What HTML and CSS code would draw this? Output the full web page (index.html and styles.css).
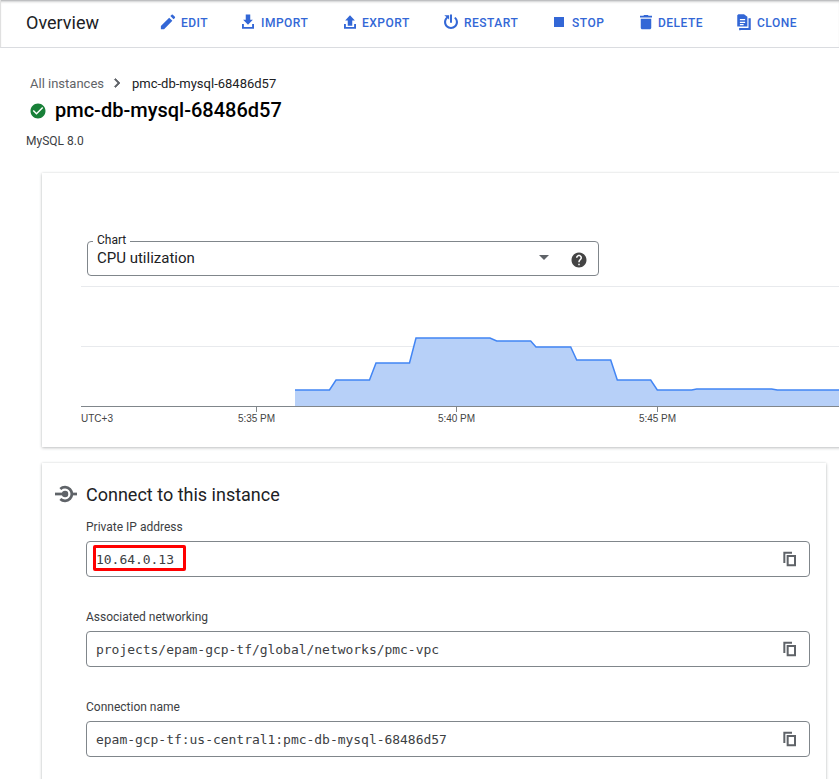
FILE: index.html
```html
<!DOCTYPE html>
<html lang="en">
<head>
<meta charset="utf-8">
<title>Overview</title>
<link rel="stylesheet" href="styles.css">
</head>
<body>
<div class="page">
  <header class="topbar">
    <h1 class="topbar-title">Overview</h1>
    <nav class="actions">
      <a class="action action-edit"><svg viewBox="0 0 24 24"><path d="M2.500 17.250V21.500h4.250L17.810 10.440l-4.250-4.250L2.500 17.250zM21.210 6.540c.39-.39.39-1.020 0-1.410l-2.840-2.840c-.39-.39-1.020-.39-1.410 0l-1.830 1.830 4.250 4.250 1.830-1.830z"/></svg>EDIT</a>
      <a class="action action-import"><svg viewBox="0 0 24 24"><path d="M9 2h6v7h3.500L12 15.500 5.500 9H9zM4 14.500h2.500V18.500h11V14.500H20V21H4z"/></svg>IMPORT</a>
      <a class="action action-export"><svg viewBox="0 0 24 24"><path d="M9 17h6v-7h3.500L12 3 5.500 10H9zM4 14.500h2.500V18.500h11V14.500H20V21H4z"/></svg>EXPORT</a>
      <a class="action action-restart"><svg viewBox="0 0 24 24"><path d="M13.300 2h-2.600v11h2.600z"/><path d="M17.830 5.170l-1.700 1.900C17.800 8.300 18.500 10 18.500 12c0 3.600-2.900 6.500-6.500 6.500S5.500 15.600 5.500 12c0-2 .8-3.800 2.300-5L9.500 9V3H3l2.900 2.200C3.900 6.900 2.700 9.300 2.700 12c0 5.100 4.200 9.300 9.300 9.300s9.300-4.200 9.300-9.300c0-2.700-1.300-5.200-3.470-6.830z"/></svg>RESTART</a>
      <a class="action action-stop"><svg viewBox="0 0 24 24"><path d="M5.300 5.300h13.400v13.400H5.300z"/></svg>STOP</a>
      <a class="action action-delete"><svg viewBox="0 0 24 24"><path d="M5 19.500c0 1.100.9 2 2 2h10c1.100 0 2-.9 2-2V7.500H5zM20 3.500h-4.500l-1-1h-5l-1 1H4V6h16z"/></svg>DELETE</a>
      <a class="action action-clone"><svg viewBox="0 0 24 24"><path fill-rule="evenodd" d="M4.500 1.500h7.500l4.500 3.500v13H3V3zM6.500 8v1.800h7V8zm0 3.500v1.800h7v-1.800zm0 3v1.800h5v-1.800z"/><path d="M18 7h3v15.500H7.500V23H5.500v-3H18z"/></svg>CLONE</a>
    </nav>
  </header>

  <main class="content">
    <div class="breadcrumb">
      <span class="crumb-link">All instances</span>
      <svg class="crumb-chevron" viewBox="0 0 24 24"><path d="M10 6L8.590 7.410 13.170 12l-4.580 4.590L10 18l6-6z"/></svg>
      <span class="crumb-current">pmc-db-mysql-68486d57</span>
    </div>
    <div class="instance-title">
      <svg class="status-icon" viewBox="0 0 24 24"><path d="M12 2C6.480 2 2 6.480 2 12s4.480 10 10 10 10-4.480 10-10S17.520 2 12 2zm-2 15l-5-5 1.410-1.410L10 14.170l7.590-7.590L19 8l-9 9z"/></svg>
      <h2>pmc-db-mysql-68486d57</h2>
    </div>
    <p class="version">MySQL 8.0</p>

    <section class="card chart-card">
      <div class="select">
        <span class="select-label">Chart</span>
        <span class="select-value">CPU utilization</span>
        <span class="select-arrow"></span>
        <svg class="help-icon" viewBox="0 0 24 24"><path d="M12 2C6.480 2 2 6.480 2 12s4.480 10 10 10 10-4.480 10-10S17.520 2 12 2zm1 17h-2v-2h2v2zm2.070-7.750l-.9.920C13.450 12.900 13 13.500 13 15h-2v-.5c0-1.100.45-2.100 1.170-2.830l1.240-1.260c.37-.36.59-.86.59-1.410 0-1.100-.9-2-2-2s-2 .9-2 2H8c0-2.210 1.790-4 4-4s4 1.790 4 4c0 .88-.36 1.680-.93 2.250z"/></svg>
      </div>
      <svg class="chart" viewBox="0 0 758 136" width="758" height="136">
        <line class="grid" x1="0" y1="0.500" x2="758" y2="0.500"/>
        <line class="grid" x1="0" y1="60.500" x2="758" y2="60.500"/>
        <path class="area" d="M214 120.500V104H248.500L255 94H288.500L295 77H328.500L335 52H409L415.700 55H449.700L455 61H489.700L495.700 74H529.700L536.300 94H569.700L576.300 104H610.700L615.700 103H690.700L696.300 104H758V120.500Z"/>
        <path class="line" d="M214 104H248.500L255 94H288.500L295 77H328.500L335 52H409L415.700 55H449.700L455 61H489.700L495.700 74H529.700L536.300 94H569.700L576.300 104H610.700L615.700 103H690.700L696.300 104H758"/>
        <line class="axis" x1="0" y1="120.500" x2="758" y2="120.500"/>
        <line class="axis" x1="175.500" y1="120" x2="175.500" y2="126"/>
        <line class="axis" x1="375.500" y1="120" x2="375.500" y2="126"/>
        <line class="axis" x1="576.500" y1="120" x2="576.500" y2="126"/>
        <text class="tick" x="0" y="136">UTC+3</text>
        <text class="tick tick-mid" x="175.500" y="136">5:35 PM</text>
        <text class="tick tick-mid" x="375.500" y="136">5:40 PM</text>
        <text class="tick tick-mid" x="576.500" y="136">5:45 PM</text>
      </svg>
    </section>

    <section class="card connect-card">
      <div class="connect-head">
        <svg class="connect-icon" viewBox="0 0 24 24"><path class="connect-stroke" d="M5.800 6.500A7.500 7.500 0 1 1 5.800 17.500"/><path d="M0 10.500h9v3H0z"/><circle cx="11" cy="12" r="3.500"/><path d="M18 10.500h6v3h-6z"/></svg>
        <h3>Connect to this instance</h3>
      </div>
      <div class="field-group">
        <label class="field-label">Private IP address</label>
        <div class="field">
          <span class="field-value">10.64.0.13</span>
          <span class="highlight"></span>
          <svg class="copy-icon" viewBox="0 0 24 24"><path fill-rule="evenodd" d="M2 1h13v3H5v14H2zM7 6h14v17H7zM10 9v11h8V9z"/></svg>
        </div>
      </div>
      <div class="field-group">
        <label class="field-label">Associated networking</label>
        <div class="field">
          <span class="field-value">projects/epam-gcp-tf/global/networks/pmc-vpc</span>
          <svg class="copy-icon" viewBox="0 0 24 24"><path fill-rule="evenodd" d="M2 1h13v3H5v14H2zM7 6h14v17H7zM10 9v11h8V9z"/></svg>
        </div>
      </div>
      <div class="field-group">
        <label class="field-label">Connection name</label>
        <div class="field">
          <span class="field-value">epam-gcp-tf:us-central1:pmc-db-mysql-68486d57</span>
          <svg class="copy-icon" viewBox="0 0 24 24"><path fill-rule="evenodd" d="M2 1h13v3H5v14H2zM7 6h14v17H7zM10 9v11h8V9z"/></svg>
        </div>
      </div>
    </section>
  </main>
</div>
</body>
</html>
```
FILE: styles.css
```css
* { box-sizing: border-box; }
html, body { margin: 0; height: 100%; overflow: hidden; background: #fff; }
body { font-family: Roboto, "Liberation Sans", sans-serif; color: #202124; }
.page { width: 839px; height: 779px; overflow: hidden; position: relative; }
.topbar {
  height: 48px; display: flex; align-items: center; padding: 0 0 2px 26px;
  border-bottom: 1px solid #dadce0; border-left: 1px solid #e0e0e0;
  box-shadow: inset 0 3px 3px -2px rgba(60,64,67,.5);
}
.topbar-title { margin: 0 0 0 -1px; font-size: 18px; font-weight: 400; width: 133px; }
.actions { display: flex; align-items: center; }
.action {
  display: flex; align-items: center; font-size: 12px; font-weight: 500; color: #3367d6;
  letter-spacing: .5px; gap: 3px;
}
.action svg { width: 18px; height: 18px; fill: #3367d6; flex: none; margin-top: -2px; }
.action-edit { width: 81px; gap: 4px; }
.action-import { width: 103px; }
.action-import svg { transform: translateX(-1px); }
.action-export { width: 100px; gap: 1px; }
.action-export svg { transform: translateX(-2px); }
.action-restart { width: 110px; }
.action-restart svg { transform: translateX(-1px); }
.action-stop { width: 86px; gap: 1px; }
.action-stop svg { transform: translateX(-3px); }
.action-delete { width: 97px; gap: 1px; }
.action-delete svg { transform: translateX(-2px); }
.action-clone svg { transform: translateX(-1px); }
.content { padding: 26px 0 0 26px; width: 800px; }
.breadcrumb { display: flex; align-items: center; padding-left: 4px; height: 18px; font-size: 13px; }
.crumb-link { color: #5f6368; }
.crumb-chevron { width: 18px; height: 18px; fill: #5f6368; stroke: #5f6368; stroke-width: 1; margin: 0 6px 0 4px; }
.crumb-current { color: #202124; }
.instance-title { display: flex; align-items: center; gap: 8px; padding-left: 3px; margin-top: 3px; height: 30px; }
.status-icon { width: 18px; height: 18px; fill: #188038; flex: none; margin-top: 2px; }
.instance-title h2 { margin: 0; font-size: 20px; font-weight: 500; color: #000; }
.version { margin: 9px 0 0; font-size: 12px; line-height: 14px; color: #3c4043; }
.card { background: #fff; box-shadow: 0 1px 3px rgba(60,64,67,.3), 0 0 2px rgba(60,64,67,.1); margin-left: 16px; }
.chart-card { width: 830px; height: 274px; margin-top: 25px; padding: 68px 0 0 39px; }
.select {
  position: relative; width: 512px; height: 35px; margin-left: 6px; display: flex; align-items: center;
  border: 1px solid #80868b; border-radius: 4px; padding: 0 10px 0 9px;
}
.select-label {
  position: absolute; left: 5px; top: -8px; padding: 0 4px; background: #fff; font-size: 12px; line-height: 12px;
}
.select-value { font-size: 15px; flex: 1; margin-top: -2px; }
.select-arrow {
  width: 0; height: 0; border-left: 5.500px solid transparent; border-right: 5.500px solid transparent;
  border-top: 5.500px solid #5f6368; margin-right: 21px; margin-top: -3px;
}
.help-icon { width: 18px; height: 18px; fill: #444; margin-top: 3px; }
.chart { display: block; margin-top: 10px; overflow: visible; }
.grid { stroke: #e8eaed; stroke-width: 1; }
.area { fill: #b7d0f8; }
.line { fill: none; stroke: #4285f4; stroke-width: 1.500; }
.axis { stroke: #80868b; stroke-width: 1; }
.tick { font-family: "Liberation Sans", sans-serif; font-size: 10px; fill: #444; }
.tick-mid { text-anchor: middle; }
.connect-card { width: 784px; margin-top: 16px; padding: 19px 16px 20px 44px; height: 340px; }
.connect-head { display: flex; align-items: center; gap: 9px; margin-left: -31px; height: 24px; }
.connect-icon { width: 22px; height: 22px; fill: #5f6368; flex: none; }
.connect-stroke { fill: none; stroke: #5f6368; stroke-width: 3; }
.connect-head h3 { margin: 0; font-size: 18px; font-weight: 400; color: #202124; }
.field-group { margin-top: 13px; }
.field-group + .field-group { margin-top: 32px; }
.field-label { display: block; font-size: 12px; line-height: 16px; color: #3c4043; height: 22px; }
.field {
  position: relative; display: flex; align-items: center; justify-content: space-between;
  width: 724px; height: 36px; border: 1px solid #80868b; border-radius: 4px; padding: 0 11px 0 9px;
}
.field-value { font-family: "DejaVu Sans Mono", "Liberation Mono", monospace; font-size: 13px; letter-spacing: -.03px; color: #3c4043; }
.highlight { position: absolute; left: 6px; top: 3px; width: 93px; height: 26px; border: 3px solid #f00; border-radius: 2px; }
.copy-icon { width: 16px; height: 16px; fill: #5f6368; flex: none; }
```
